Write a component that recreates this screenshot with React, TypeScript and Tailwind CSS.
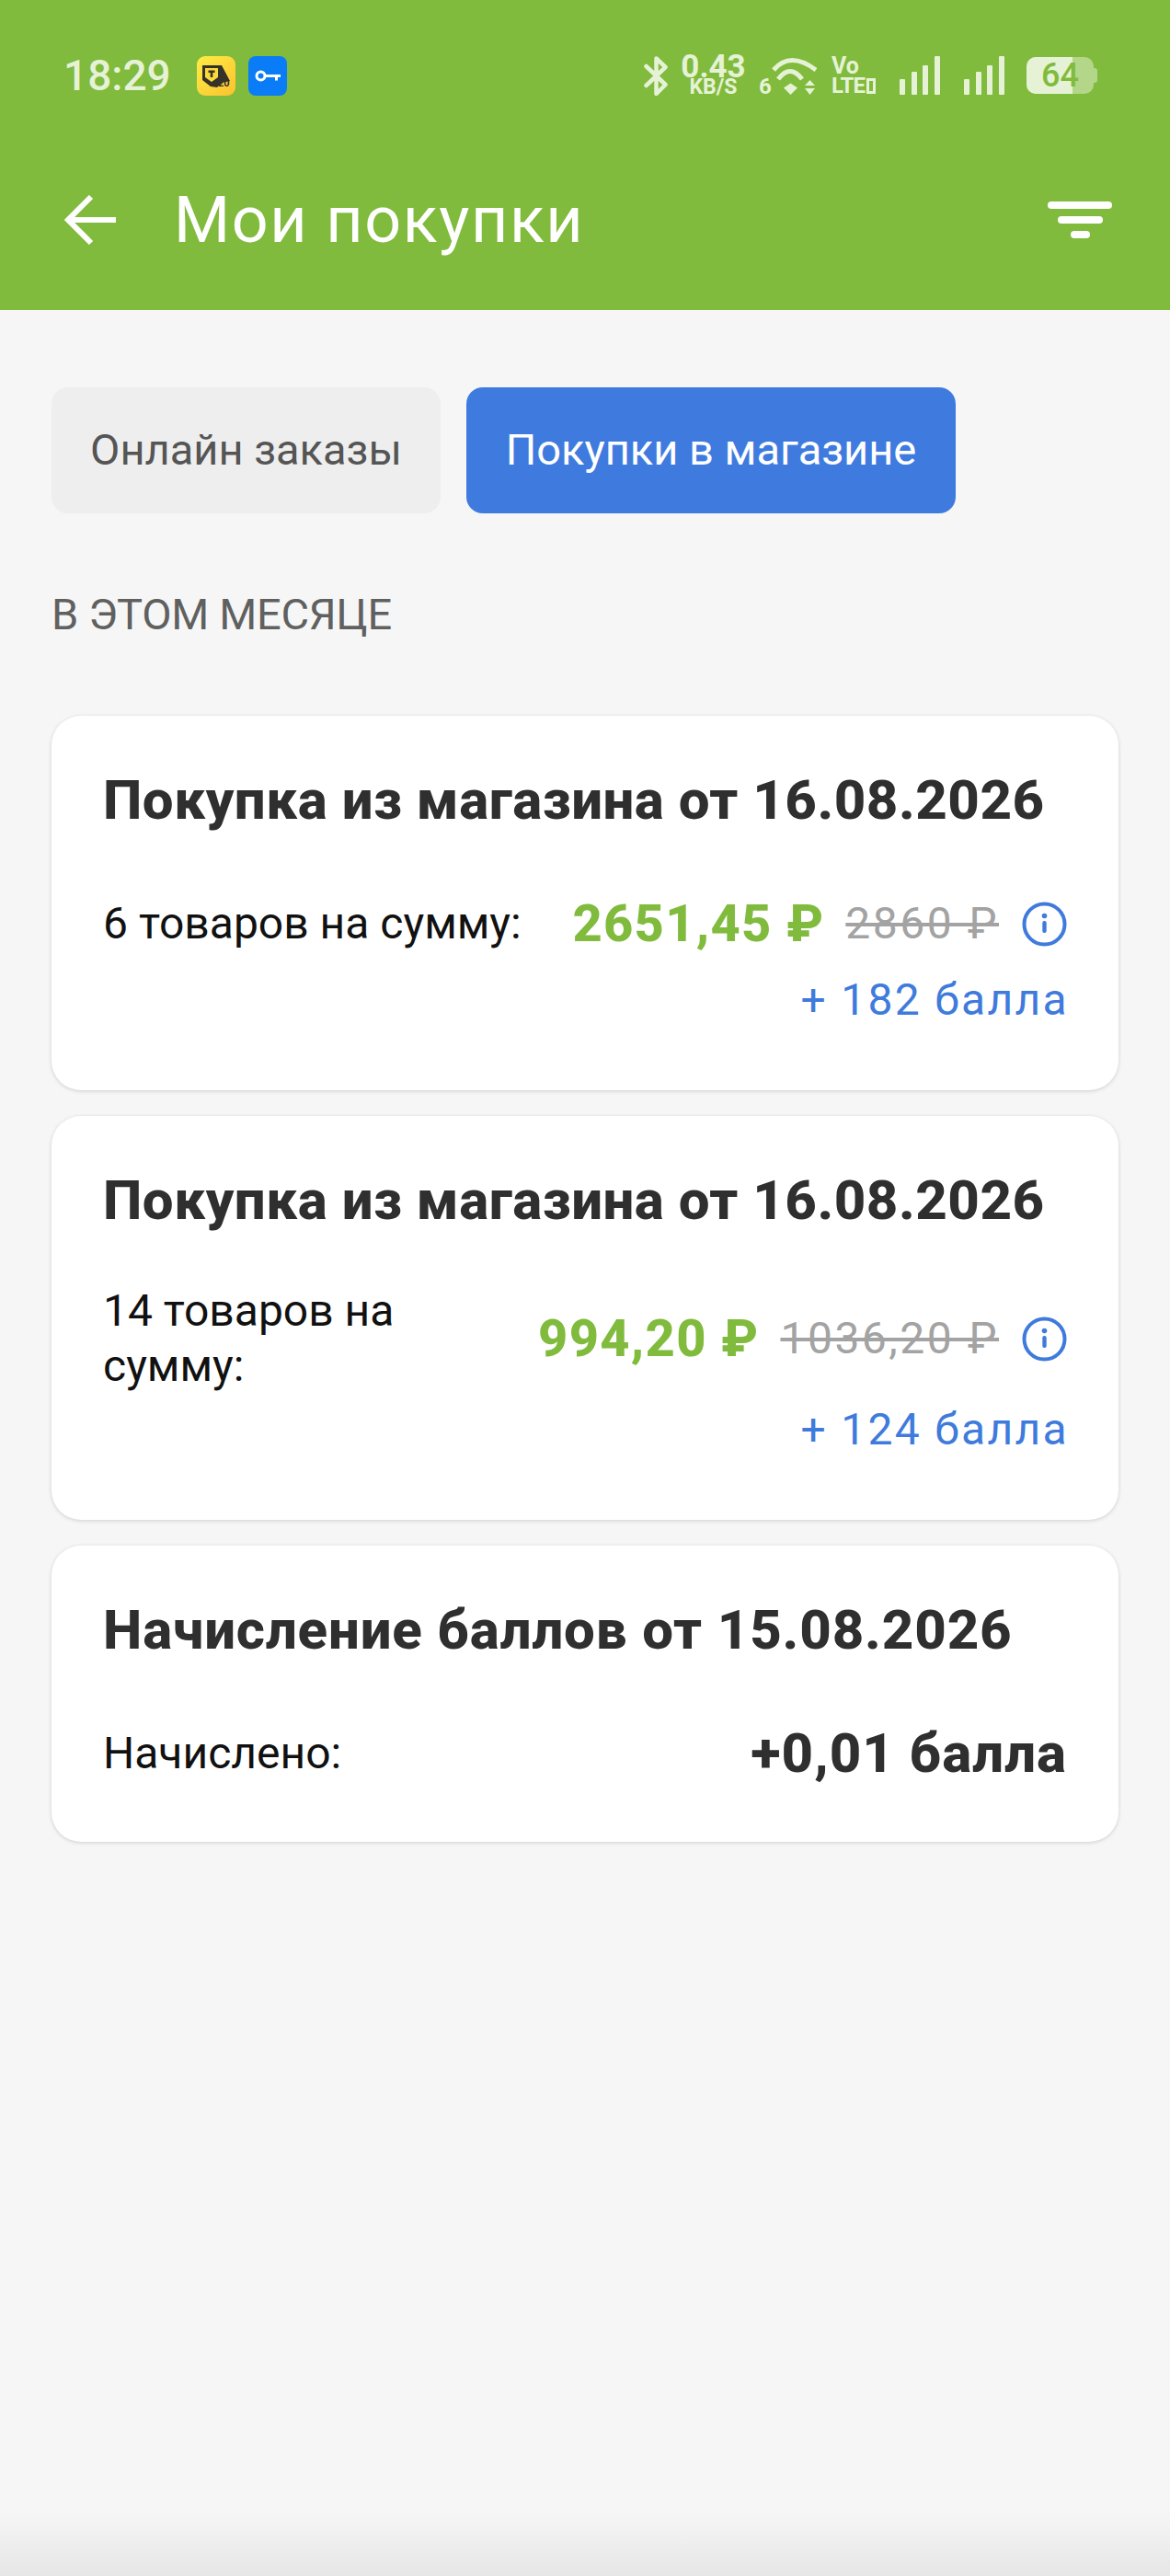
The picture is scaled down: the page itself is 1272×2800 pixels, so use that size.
const Logo = () => (
  <svg width="42" height="43" viewBox="0 0 42 43">
    <defs>
      <linearGradient id="yel" x1="0" y1="0" x2="1" y2="1">
        <stop offset="0" stopColor="#ffec45" />
        <stop offset="1" stopColor="#fbc22e" />
      </linearGradient>
    </defs>
    <rect width="42" height="43" rx="9" fill="url(#yel)" />
    <path d="M6 10h21l9 17-9 2-5 5-7-1-9-7z" fill="#35322a" />
    <path d="M9 13h14v10l-7 5-7-5z" fill="#fbd93a" />
    <path d="M12.500 15.500h7v2.500h-2.200v5h-2.600v-5h-2.200z" fill="#35322a" />
    <text x="23" y="33" fontSize="11" fontWeight="700" fill="#35322a" fontFamily="Roboto, sans-serif">20</text>
  </svg>
);

const KeyIcon = () => (
  <svg width="42" height="43" viewBox="0 0 42 43">
    <rect width="42" height="43" rx="8" fill="#0a7cf7" />
    <circle cx="13.500" cy="21.500" r="4.500" fill="none" stroke="#fff" strokeWidth="3" />
    <path d="M18 20h17v3h-3v3.500h-3V23H18z" fill="#fff" />
  </svg>
);

const Bluetooth = () => (
  <svg width="27" height="43" viewBox="0 0 27 43" fill="none" stroke="#e6f2d6" strokeWidth="4.500" strokeLinejoin="round" strokeLinecap="round">
    <path d="M2.500 11l21 20-10 10V2.500l10 9.500-21 20" />
  </svg>
);

const Wifi = () => (
  <svg width="49" height="43" viewBox="14 0 49 43" fill="none">
    <path d="M16 15Q34-6 62 15" stroke="#e6f2d6" strokeWidth="5" />
    <path d="M21 25Q34 8 47 25" stroke="#e6f2d6" strokeWidth="5" />
    <path d="M27 34.500l7.500-5 7.500 5-7.500 7.500z" fill="#e6f2d6" />
    <path d="M50 32l5.500-6 5.500 6zM50 35h11l-5.500 7z" fill="#e6f2d6" />
  </svg>
);

const Signal = () => (
  <svg width="44" height="42" viewBox="0 0 44 42" fill="#e6f2d6">
    <rect x="0" y="25" width="6" height="17" rx="1" />
    <rect x="13" y="17" width="6" height="25" rx="1" />
    <rect x="25" y="10" width="6" height="32" rx="1" />
    <rect x="38" y="0" width="6" height="42" rx="1" />
  </svg>
);

const InfoIcon = () => (
  <svg width="49" height="49" viewBox="0 0 49 49" fill="none">
    <circle cx="24.500" cy="24.500" r="22" stroke="#3f7bdc" strokeWidth="4" />
    <circle cx="24.500" cy="15.500" r="2.800" fill="#3f7bdc" />
    <rect x="22.300" y="21" width="4.400" height="13" rx="2" fill="#3f7bdc" />
  </svg>
);

const PurchaseCard = ({ title, label, price, oldPrice, points }: { title: string; label: string; price: string; oldPrice: string; points: string }) => (
  <div className="rounded-[32px] bg-white pt-[56px] pb-[52px] px-[56px] shadow-[0_1px_4px_rgba(0,0,0,0.16)]">
    <div className="h-[72px] whitespace-nowrap text-[60px] leading-[72px] font-extrabold text-[#2f2f2f] tracking-[0.5px]">{title}</div>
    <div className="mt-[54px] flex min-h-[88px] items-center">
      <div className="w-[460px] shrink-0 text-[48px] leading-[60px] text-[#111111]">{label}</div>
      <div className="ml-auto flex items-center whitespace-nowrap">
        <span className="text-[56px] leading-[60px] font-extrabold text-[#80bb3d] tracking-[1.3px]">{price}</span>
        <span className="ml-[23px] text-[48px] leading-[60px] text-[#a3a3a3] line-through tracking-[2.5px]">{oldPrice}</span>
        <span className="ml-[25px] shrink-0">
          <InfoIcon />
        </span>
      </div>
    </div>
    <div className="mt-[9px] mb-[16px] -mr-[2px] text-right text-[48px] leading-[60px] text-[#3f7bdc] tracking-[2.3px]">{points}</div>
  </div>
);

export default function App() {
  return (
    <div className="relative h-[2800px] w-[1272px] overflow-hidden bg-[#f6f6f6] font-['Roboto',sans-serif]">
      {/* header */}
      <div className="h-[337px] bg-[#80bb3d] pt-[60px]">
        <div className="flex h-[44px] items-center pl-[69px] pr-[79px]">
          <span className="w-[145px] text-[46px] leading-[44px] font-medium text-[#e6f2d6]">18:29</span>
          <Logo />
          <span className="ml-[14px]">
            <KeyIcon />
          </span>
          <div className="ml-auto flex items-center">
            <Bluetooth />
            <div className="ml-[14px] flex w-[69px] flex-col items-center font-bold text-[#e6f2d6]">
              <span className="text-[35px] leading-[26px]">0.43</span>
              <span className="text-[23px] leading-[18px]">KB/S</span>
            </div>
            <div className="ml-[15px] flex w-[63px] items-end">
              <span className="w-[14px] text-[24px] leading-[20px] font-bold text-[#e6f2d6]">6</span>
              <Wifi />
            </div>
            <div className="ml-[16px] flex w-[53px] flex-col font-bold text-[#e6f2d6]">
              <span className="text-[25px] leading-[22px]">Vo</span>
              <div className="flex items-center gap-[2px]">
                <span className="text-[24px] leading-[20px] tracking-[-0.8px]">LTE</span>
                <div className="h-[17px] w-[10px] border-[3px] border-[#e6f2d6]" />
              </div>
            </div>
            <span className="ml-[21px]">
              <Signal />
            </span>
            <span className="ml-[26px]">
              <Signal />
            </span>
            <div className="relative ml-[24px] h-[40px] w-[77px]">
              <div className="absolute inset-y-0 left-0 w-[73px] rounded-[10px] bg-[#e6f2d6]/50" />
              <div className="absolute inset-y-0 left-0 w-[50px] rounded-l-[10px] bg-[#e6f2d6]" />
              <div className="absolute right-0 top-[12px] h-[16px] w-[4px] rounded-r-[3px] bg-[#e6f2d6]/50" />
              <span className="absolute left-[16px] top-0 text-[36px] leading-[40px] font-medium text-[#80bb3d]">64</span>
            </div>
          </div>
        </div>
        <div className="mt-[98px] flex h-[74px] items-center pl-[70px] pr-[63px]">
          <svg width="56" height="54" viewBox="0 0 56 54" fill="none" stroke="#fff" strokeWidth="6">
            <path d="M56 27H5M29 2L4 27l25 25" />
          </svg>
          <span className="ml-[63px] text-[70px] leading-[74px] text-white tracking-[1.6px]">Мои покупки</span>
          <div className="ml-auto flex w-[70px] flex-col items-center gap-[8px]">
            <div className="h-[8px] w-[70px] rounded-full bg-white" />
            <div className="h-[8px] w-[49px] rounded-full bg-white" />
            <div className="h-[8px] w-[21px] rounded-full bg-white" />
          </div>
        </div>
      </div>

      <div className="px-[56px] pt-[84px]">
        {/* tabs */}
        <div className="flex gap-[28px]">
          <div className="flex h-[137px] w-[423px] items-center justify-center rounded-[18px] bg-[#eeeeee] text-[47px] text-[#555555]">Онлайн заказы</div>
          <div className="flex h-[137px] w-[532px] items-center justify-center rounded-[18px] bg-[#3f7bdf] text-[47px] text-white">Покупки в магазине</div>
        </div>

        <div className="mt-[82px] mb-[82px] text-[47px] leading-[56px] text-[#606060] tracking-[-0.3px]">В ЭТОМ МЕСЯЦЕ</div>

        <div className="flex flex-col gap-[28px]">
          <PurchaseCard title="Покупка из магазина от 16.08.2026" label="6 товаров на сумму:" price="2651,45 ₽" oldPrice="2860 ₽" points="+ 182 балла" />
          <PurchaseCard title="Покупка из магазина от 16.08.2026" label="14 товаров на сумму:" price="994,20 ₽" oldPrice="1036,20 ₽" points="+ 124 балла" />
          <div className="rounded-[32px] bg-white pt-[56px] pb-[52px] px-[56px] shadow-[0_1px_4px_rgba(0,0,0,0.16)]">
            <div className="h-[72px] whitespace-nowrap text-[60px] leading-[72px] font-extrabold text-[#2f2f2f] tracking-[0.85px]">Начисление баллов от 15.08.2026</div>
            <div className="mt-[54px] flex min-h-[88px] items-center justify-between">
              <span className="text-[48px] leading-[60px] text-[#111111]">Начислено:</span>
              <span className="text-[60px] leading-[60px] font-extrabold text-[#2f2f2f] tracking-[1px]">+0,01 балла</span>
            </div>
          </div>
        </div>
      </div>

      {/* bottom fade */}
      <div className="absolute inset-x-0 bottom-0 h-[70px] bg-gradient-to-b from-transparent to-[#e6e6e6]" />
    </div>
  );
}
